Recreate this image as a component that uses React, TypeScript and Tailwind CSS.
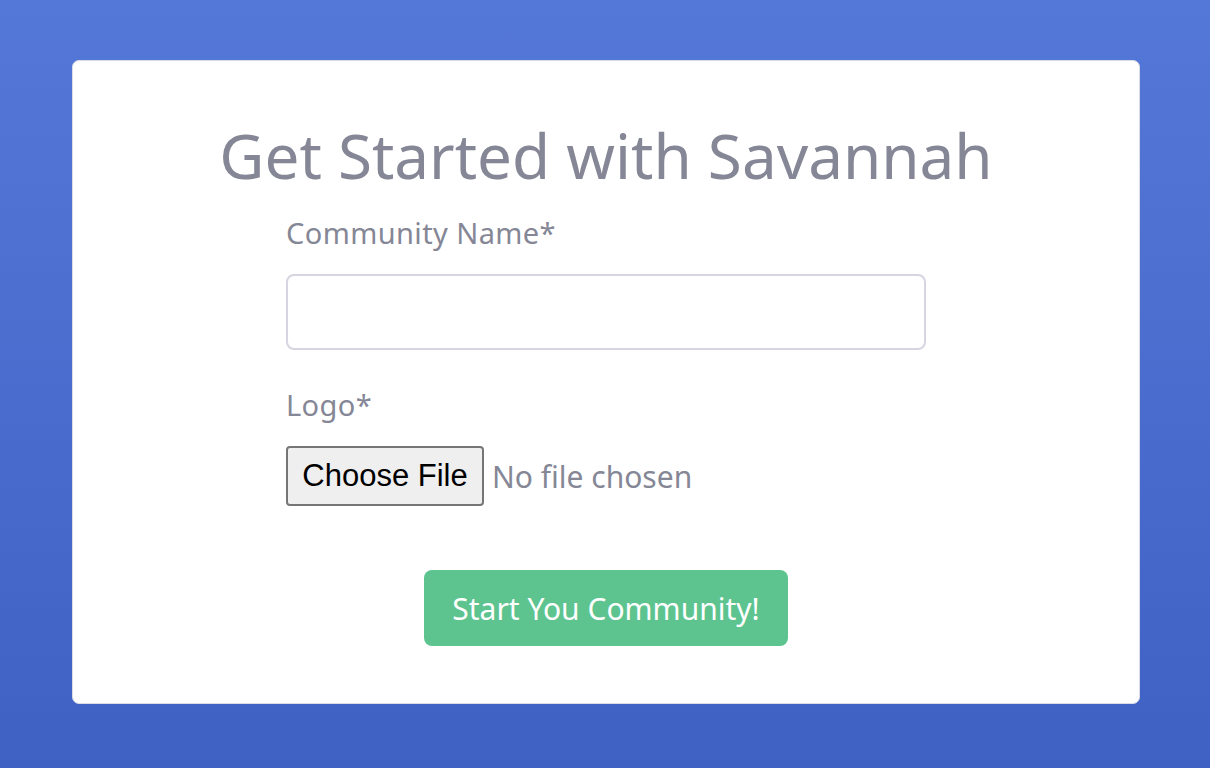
export default function App() {
  return (
    <main
      className="flex h-[768px] w-full bg-gradient-to-b from-[#5478d8] to-[#4061c4] pl-[72px] pt-[60px]"
      style={{ fontFamily: '"Noto Sans", "Lato", sans-serif' }}
    >
      <section className="flex h-[644px] w-[1068px] flex-col items-center rounded-[7px] border border-[#d9dce6] bg-white pt-[58px]">
        <h1 className="text-[62px] leading-[72px] text-[#858796]">Get Started with Savannah</h1>
        <form className="mt-[24px] flex w-[640px] flex-col">
          <label className="text-[29px] leading-[36px] tracking-[0.4px] text-[#858796]">Community Name*</label>
          <input
            type="text"
            className="mt-[23px] h-[76px] rounded-[8px] border-2 border-[#d6d6e2] px-4 text-[26px] outline-none"
          />
          <label className="mt-[37px] text-[29px] leading-[36px] tracking-[0.4px] text-[#858796]">Logo*</label>
          <div className="mt-[23px] flex items-center gap-[8px]">
            <span
              className="flex h-[60px] w-[198px] items-center justify-center rounded-[4px] border-2 border-[#767676] bg-[#efefef] text-[31px] text-black"
              style={{ fontFamily: '"Liberation Sans", Arial, sans-serif' }}
            >
              Choose File
            </span>
            <span className="text-[30px] text-[#858796]">No file chosen</span>
          </div>
          <button
            type="button"
            className="mx-auto mt-[64px] h-[76px] w-[364px] rounded-[8px] bg-[#5dc48f] text-[30px] text-white"
          >
            Start You Community!
          </button>
        </form>
      </section>
    </main>
  )
}
